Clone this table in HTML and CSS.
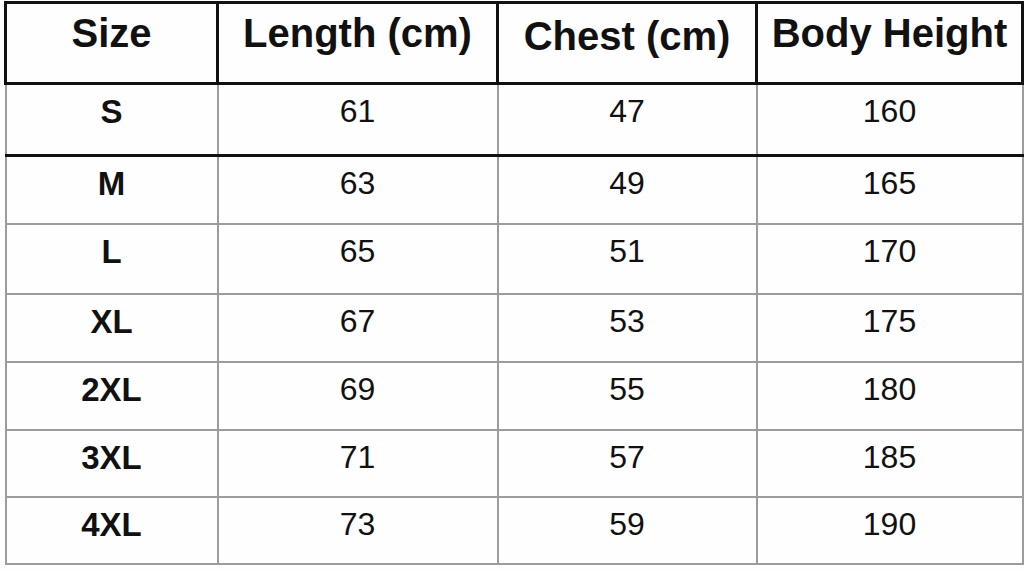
FILE: index.html
```html
<!DOCTYPE html>
<html>
<head>
<meta charset="utf-8">
<link rel="stylesheet" href="styles.css">
</head>
<body>
<table class="size-table">
  <colgroup>
    <col class="c1"><col class="c2"><col class="c3"><col class="c4">
  </colgroup>
  <thead>
    <tr class="head-row">
      <th>Size</th>
      <th>Length (cm)</th>
      <th class="chest">Chest (cm)</th>
      <th>Body Height</th>
    </tr>
  </thead>
  <tbody>
    <tr class="r-s first"><td class="sz">S</td><td>61</td><td>47</td><td>160</td></tr>
    <tr class="r-m"><td class="sz">M</td><td>63</td><td>49</td><td>165</td></tr>
    <tr class="r-l"><td class="sz">L</td><td>65</td><td>51</td><td>170</td></tr>
    <tr class="r-xl"><td class="sz">XL</td><td>67</td><td>53</td><td>175</td></tr>
    <tr class="r-2xl"><td class="sz">2XL</td><td>69</td><td>55</td><td>180</td></tr>
    <tr class="r-3xl"><td class="sz">3XL</td><td>71</td><td>57</td><td>185</td></tr>
    <tr class="r-4xl"><td class="sz">4XL</td><td>73</td><td>59</td><td>190</td></tr>
  </tbody>
</table>
</body>
</html>
```
FILE: styles.css
```css
html, body {
  margin: 0;
  padding: 0;
  background: #fefefe;
}
body {
  padding: 1px 0 0 4px;
  font-family: "Liberation Sans", Arial, sans-serif;
  color: #111;
}
.size-table {
  border-collapse: collapse;
  table-layout: fixed;
  width: 1017px;
}
.c1 { width: 212px; }
.c2 { width: 280px; }
.c3 { width: 259px; }
.c4 { width: 266px; }

th {
  border: 3px solid #111;
  font-size: 40px;
  font-weight: bold;
  line-height: 1;
  text-align: center;
  vertical-align: top;
  padding: 9px 0 0 0;
  height: 66px;
}
th.chest { padding-top: 12px; }

td {
  border: 2px solid #9c9c9c;
  font-size: 32px;
  line-height: 1;
  text-align: center;
  vertical-align: top;
  padding: 10px 0 0 0;
  box-sizing: border-box;
}
td.sz {
  font-weight: bold;
  font-size: 33px;
}
tr.first td { border-bottom: 3px solid #111; }

.r-s td { height: 72px; }
.r-m td { height: 68px; }
.r-l td { height: 70px; }
.r-xl td { height: 68px; }
.r-2xl td { height: 68px; }
.r-3xl td { height: 67px; }
.r-4xl td { height: 67px; }
```
